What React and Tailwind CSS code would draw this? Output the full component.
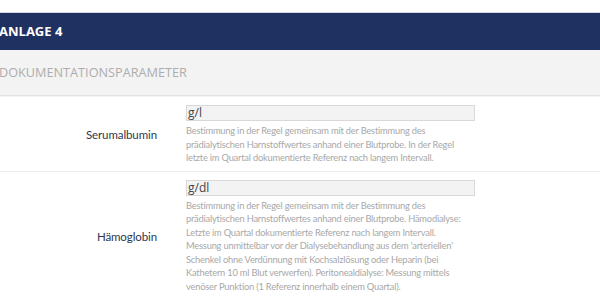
import React from "react";

const rows = [
  {
    label: "Serumalbumin",
    unit: "g/l",
    help: [
      "Bestimmung in der Regel gemeinsam mit der Bestimmung des",
      "prädialytischen Harnstoffwertes anhand einer Blutprobe. In der Regel",
      "letzte im Quartal dokumentierte Referenz nach langem Intervall.",
    ],
  },
  {
    label: "Hämoglobin",
    unit: "g/dl",
    help: [
      "Bestimmung in der Regel gemeinsam mit der Bestimmung des",
      "prädialytischen Harnstoffwertes anhand einer Blutprobe. Hämodialyse:",
      "Letzte im Quartal dokumentierte Referenz nach langem Intervall.",
      "Messung unmittelbar vor der Dialysebehandlung aus dem 'arteriellen'",
      "Schenkel ohne Verdünnung mit Kochsalzlösung oder Heparin (bei",
      "Kathetern 10 ml Blut verwerfen). Peritonealdialyse: Messung mittels",
      "venöser Punktion (1 Referenz innerhalb einem Quartal).",
    ],
  },
];

const App = () => {
  return (
    <div className="w-[600px] h-[300px] overflow-hidden bg-white font-['Open_Sans',sans-serif] pt-3">
      {/* HEADER */}
      <div className="h-[38px] bg-[#1f3160] border-t border-[#d5d8e0] flex items-center">
        <h1 className="text-[13px] font-bold text-white -ml-px">ANLAGE 4</h1>
      </div>

      {/* SECTION */}
      <div className="h-[46px] bg-[#f3f3f3] border-b border-[#e2e2e2] flex items-center">
        <h2 className="text-[12.7px] text-[#adadad] -ml-px">DOKUMENTATIONSPARAMETER</h2>
      </div>

      {/* ROWS */}
      <div className="flex flex-col font-['Lato',sans-serif]">
        {rows.map((row) => (
          <div
            key={row.label}
            className="flex items-center border-t border-[#ececec] first:border-t-[#f4f4f4] pt-[8px] pb-[6px]"
          >
            <div className="w-[157px] text-right text-[11.5px] tracking-[-0.1px] text-[#2d3850]">
              {row.label}
            </div>
            <div className="ml-[29px] w-[289px]">
              <div className="h-[16px] bg-[#f3f3f3] border border-[#d8d8d8] font-['Open_Sans',sans-serif] text-[12px] leading-[14px] text-[#444] pl-px">
                {row.unit}
              </div>
              <p className="text-[9.3px] tracking-[-0.2px] leading-[13.5px] text-[#a8a8a8] mt-[3px] whitespace-nowrap">
                {row.help.map((line) => (
                  <span key={line} className="block">{line}</span>
                ))}
              </p>
            </div>
          </div>
        ))}
      </div>
    </div>
  );
};

export default App;
